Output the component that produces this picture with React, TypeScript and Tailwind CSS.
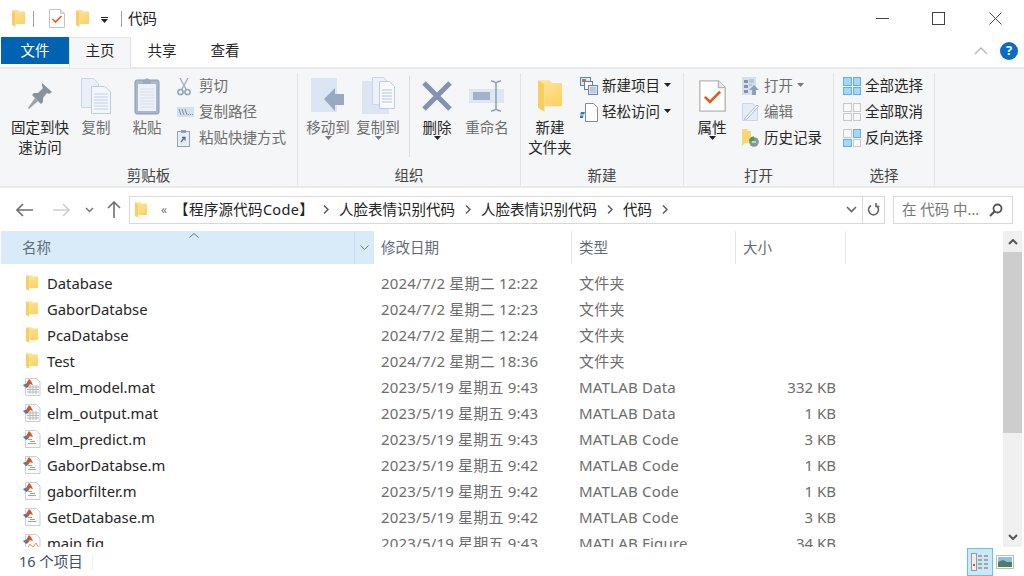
import type { ReactNode } from 'react';

const rows = [
  { name: 'Database', date: '2024/7/2 星期二 12:22', type: '文件夹', size: '', icon: 'folder' },
  { name: 'GaborDatabse', date: '2024/7/2 星期二 12:23', type: '文件夹', size: '', icon: 'folder' },
  { name: 'PcaDatabse', date: '2024/7/2 星期二 12:24', type: '文件夹', size: '', icon: 'folder' },
  { name: 'Test', date: '2024/7/2 星期二 18:36', type: '文件夹', size: '', icon: 'folder' },
  { name: 'elm_model.mat', date: '2023/5/19 星期五 9:43', type: 'MATLAB Data', size: '332 KB', icon: 'mat' },
  { name: 'elm_output.mat', date: '2023/5/19 星期五 9:43', type: 'MATLAB Data', size: '1 KB', icon: 'mat' },
  { name: 'elm_predict.m', date: '2023/5/19 星期五 9:43', type: 'MATLAB Code', size: '3 KB', icon: 'm' },
  { name: 'GaborDatabse.m', date: '2023/5/19 星期五 9:42', type: 'MATLAB Code', size: '1 KB', icon: 'm' },
  { name: 'gaborfilter.m', date: '2023/5/19 星期五 9:42', type: 'MATLAB Code', size: '1 KB', icon: 'm' },
  { name: 'GetDatabase.m', date: '2023/5/19 星期五 9:42', type: 'MATLAB Code', size: '3 KB', icon: 'm' },
  { name: 'main.fig', date: '2023/5/19 星期五 9:43', type: 'MATLAB Figure', size: '34 KB', icon: 'fig' },
];

function Folder({ w = 13, h = 17 }: { w?: number; h?: number }) {
  return (
    <svg width={w} height={h} viewBox="0 0 13 17">
      <defs>
        <linearGradient id="folderFill" x1="0" y1="0" x2="0.6" y2="1">
          <stop offset="0" stopColor="#fde69c" />
          <stop offset="1" stopColor="#fbd46a" />
        </linearGradient>
      </defs>
      <path d="M0 0h6l1.500 1.500H13V14H3.500V2z" fill="url(#folderFill)" />
      <path d="M0 0l3.500 2v15L0 15z" fill="#f8cf5f" />
    </svg>
  );
}

function CheckDoc({ w = 16, h = 19 }: { w?: number; h?: number }) {
  return (
    <svg width={w} height={h} viewBox="0 0 16 19">
      <path d="M.5.5h11l4 4v14H.5z" fill="#fff" stroke="#b5b5b5" strokeWidth="0.8" />
      <path d="M11.500.5v4h4" fill="#e8e8e8" stroke="#b5b5b5" strokeWidth="0.8" />
      <path d="M3.500 10l3 3 6-6" fill="none" stroke="#e8591c" strokeWidth="1.600" />
    </svg>
  );
}

function PageStack() {
  return (
    <svg width="30" height="36" viewBox="0 0 30 36">
      <path d="M.5.5h12l5 5v24H.5z" fill="#e9eff8" stroke="#c9d6e8" />
      <path d="M10.500 8.500h13l6 5v22h-19z" fill="#f3f6fb" stroke="#bdcde2" />
      <path d="M13 16h14M13 19h14M13 22h14M13 25h14M13 28h14M13 31h14" stroke="#c3d0e2" />
    </svg>
  );
}

function Clipboard() {
  return (
    <svg width="26" height="38" viewBox="0 0 26 38">
      <rect x="1" y="3" width="24" height="34" rx="2" fill="#a9b6cf" stroke="#8b99b6" />
      <rect x="4" y="7" width="18" height="27" fill="#edf2f9" />
      <path d="M6 12h14M6 15h14M6 18h14M6 21h14M6 24h14M6 27h14M6 30h14" stroke="#d5deec" />
      <path d="M9 4l4-3 4 3v3H9z" fill="#9aa8c3" />
    </svg>
  );
}

function Pin() {
  return (
    <svg width="26" height="28" viewBox="0 0 26 28">
      <path d="M15 1l10 9-3 2-2-1-4 5 0 4-2 2-9-9 2-2 4 0 5-5-1-2z" fill="#87929b" />
      <path d="M8 16l3 3-9 8-1-1z" fill="#9aa3ab" />
    </svg>
  );
}

function Scissors() {
  return (
    <svg width="14" height="19" viewBox="0 0 14 19" fill="none">
      <path d="M3 1l6 11M11 1L5 12" stroke="#a5aeba" strokeWidth="1.400" />
      <circle cx="3.500" cy="15" r="2.600" stroke="#8ea2c0" strokeWidth="1.500" />
      <circle cx="10.500" cy="15" r="2.600" stroke="#8ea2c0" strokeWidth="1.500" />
    </svg>
  );
}

function CopyPathIcon() {
  return (
    <svg width="17" height="10" viewBox="0 0 17 10">
      <rect width="17" height="10" fill="#d5e1f1" />
      <path d="M2 2l2 6M5 2l2 6M8 2l2 6" stroke="#7e8ea5" />
      <path d="M11 7.500h1M13 7.500h1M15 7.500h1" stroke="#7e8ea5" />
    </svg>
  );
}

function PasteShortcutIcon() {
  return (
    <svg width="13" height="17" viewBox="0 0 13 17">
      <rect x=".5" y="1.500" width="12" height="15" fill="#e6edf6" stroke="#90a0b8" />
      <rect x="4" y="0" width="5" height="3" fill="#90a0b8" />
      <path d="M4 12l3-4M5 7.500h3v3" fill="none" stroke="#5c6d86" strokeWidth="1.300" />
    </svg>
  );
}

function MoveIcon() {
  return (
    <svg width="34" height="36" viewBox="0 0 34 36">
      <rect width="26" height="34" fill="#dbe5f3" />
      <path d="M13 24l11-11v6h9v11h-9v6z" fill="#98a9c1" transform="translate(0 -3)" />
    </svg>
  );
}

function CopyToIcon() {
  return (
    <svg width="33" height="38" viewBox="0 0 33 38">
      <rect y="4" width="27" height="33" fill="#dbe5f3" />
      <path d="M10.500.5h11l5 5v22h-16z" fill="#edf2f9" stroke="#c9d6e8" />
      <path d="M17.500 4.500h10l5 5v22h-15z" fill="#f7f9fc" stroke="#bdcde2" />
      <path d="M20 13h10M20 16h10M20 19h10M20 22h10M20 25h10" stroke="#b5c3d6" />
    </svg>
  );
}

function DeleteX() {
  return (
    <svg width="32" height="32" viewBox="0 0 32 32">
      <path d="M3 3l26 26M29 3L3 29" stroke="#8393ad" strokeWidth="5" />
    </svg>
  );
}

function RenameIcon() {
  return (
    <svg width="36" height="32" viewBox="0 0 36 32" fill="none">
      <rect x="0" y="9" width="35" height="14" fill="#dde7f4" />
      <rect x="4" y="12" width="17" height="8" fill="#a4b2c8" />
      <path d="M22 1c3 0 4 1 5 2 1-1 2-2 5-2M27 3v26M22 31c3 0 4-1 5-2 1 1 2 2 5 2" stroke="#8e9db5" strokeWidth="1.500" />
    </svg>
  );
}

function NewItemIcon() {
  return (
    <svg width="18" height="18" viewBox="0 0 18 18">
      <rect x=".5" y=".5" width="10" height="8" fill="#dcebf8" stroke="#4b88bd" />
      <rect x="2" y="2" width="4" height="3" fill="#e25d4c" />
      <rect x="4.500" y="4.500" width="8" height="8" fill="#fff" stroke="#6d7f95" />
      <rect x="8.500" y="8.500" width="9" height="9" fill="#d7e4f3" stroke="#6f86a5" />
      <path d="M10 11h6M10 13h6M10 15h6" stroke="#9fb1c8" />
    </svg>
  );
}

function EasyAccessIcon() {
  return (
    <svg width="18" height="19" viewBox="0 0 18 19">
      <path d="M5.500.5h8l4 4v14h-12z" fill="#fff" stroke="#8a8a8a" />
      <path d="M1 9h4l-1 2.500H0z" fill="#2c7dc4" />
      <path d="M0 12.500h3.500L3 15H0z" fill="#2c7dc4" />
    </svg>
  );
}

function OpenIcon() {
  return (
    <svg width="17" height="18" viewBox="0 0 17 18">
      <rect width="14" height="18" fill="#d5dfed" />
      <path d="M2 3h4v3H2zM2 8h4v3H2zM2 13h4v3H2z" fill="#8494ab" />
      <path d="M7 3h5M7 5h5M7 8h3" stroke="#a3b0c4" />
      <path d="M12 8l5 5h-3v5h-4v-5H7z" fill="#8da0ba" />
    </svg>
  );
}

function EditIcon() {
  return (
    <svg width="17" height="18" viewBox="0 0 17 18" fill="none">
      <path d="M.5.5h10l5 4v13H.5z" fill="#e4ecf6" stroke="#cbd7e6" />
      <path d="M3 15L15 2l1.500 1.500L5 16l-2.500 .5z" fill="#fff" stroke="#a9b9ce" />
    </svg>
  );
}

function HistoryIcon() {
  return (
    <svg width="18" height="18" viewBox="0 0 18 18">
      <path d="M0 0h5l1 2h3v12H3l-3 3z" fill="#fbd774" />
      <circle cx="12" cy="13" r="4.800" fill="#8d9499" />
      <path d="M7 12a5 5 0 0 1 5-4.500v4z" fill="#3aa63c" />
      <path d="M10 13h4" stroke="#fff" />
    </svg>
  );
}

function SelectGrid({ on }: { on: number[] }) {
  const cells = [0, 1, 2, 3];
  return (
    <div className="grid h-[18px] w-[18px] grid-cols-2 gap-[1px]">
      {cells.map(c => (
        <div key={c} className={on.includes(c) ? 'border border-[#5fb0ee] bg-[#a8d6fa]' : 'border border-[#c9c9c9] bg-[#f8f8f8]'} />
      ))}
    </div>
  );
}

function FileIcon({ kind }: { kind: string }) {
  if (kind === 'folder') {
    return <Folder w={12} h={16} />;
  }
  return (
    <svg width="18" height="18" viewBox="0 0 18 18">
      <path d="M2.500 .5h11l3.500 3.500v13.500h-14.500z" fill="#fbfbfb" stroke="#c9d0d8" />
      {kind === 'mat' && (
        <path d="M4 9h12M4 11.500h12M4 14h12M7 7v9M10 7v9M13 7v9" stroke="#b9b9b9" strokeWidth="1" fill="none" />
      )}
      {kind === 'm' && (
        <g>
          <path d="M5 9.500h4M7 11.500h5" stroke="#77b777" />
          <path d="M5 13.500h8" stroke="#a5a5a5" />
        </g>
      )}
      {kind === 'fig' && <path d="M4 15l3-5 3 3 3-4 3 5" stroke="#e99a55" fill="none" />}
      <path d="M0 7l3-1 3-5 2 2 2 4-3-1-2 3z" fill="#d9532a" />
      <path d="M0 7l3-1 2 3-2 1z" fill="#3c7fc0" />
    </svg>
  );
}

function Caret({ color = '#555' }: { color?: string }) {
  return (
    <svg width="7" height="4" viewBox="0 0 7 4">
      <path d="M0 0h7L3.500 4z" fill={color} />
    </svg>
  );
}

function BigButton({ icon, lines, muted, caret, className }: { icon: ReactNode; lines: string[]; muted?: boolean; caret?: boolean; className: string }) {
  return (
    <div className={'flex flex-col items-center ' + className}>
      <div className="flex h-[44px] w-full items-center justify-center pt-[2px]">{icon}</div>
      {lines.map(l => (
        <div key={l} className={'h-[20px] whitespace-nowrap leading-[20px] ' + (muted ? 'text-[#6e6e6e]' : 'text-[#262626]')}>{l}</div>
      ))}
      {caret && <div className="mt-[-1px]"><Caret color={muted ? '#777' : '#222'} /></div>}
    </div>
  );
}

function SmallButton({ icon, label, muted, caret }: { icon: ReactNode; label: string; muted?: boolean; caret?: boolean }) {
  return (
    <div className="flex h-[26px] items-center">
      <div className="flex w-[22px] shrink-0 items-center">{icon}</div>
      <span className={'whitespace-nowrap ' + (muted ? 'text-[#6e6e6e]' : 'text-[#262626]')}>{label}</span>
      {caret && <span className="mb-[3px] ml-[4px]"><Caret color={muted ? '#777' : '#222'} /></span>}
    </div>
  );
}

function Group({ label, className, children }: { label: string; className: string; children: ReactNode }) {
  return (
    <div className={'flex flex-col border-r border-[#e2e3e4] ' + className}>
      <div className="flex min-h-0 flex-1">{children}</div>
      <div className="h-[21px] shrink-0 text-center leading-[20px] text-[#444]">{label}</div>
    </div>
  );
}

function Crumb() {
  return (
    <svg className="mx-[10px] shrink-0" width="6" height="9" viewBox="0 0 6 9">
      <path d="M1 .5l4 4-4 4" fill="none" stroke="#555" strokeWidth="1.400" />
    </svg>
  );
}

export default function App() {
  return (
    <div className="flex h-[576px] w-[1024px] flex-col overflow-hidden bg-white text-[14.5px] text-[#262626]" style={{ fontFamily: '"Noto Sans", "Noto Sans CJK SC", sans-serif' }}>
      {/* title bar */}
      <div className="flex h-[37px] shrink-0 items-center">
        <div className="ml-[12px]"><Folder /></div>
        <div className="ml-[8px] h-[16px] w-px bg-[#a0a0a0]" />
        <div className="ml-[15px]"><CheckDoc /></div>
        <div className="ml-[11px]"><Folder /></div>
        <div className="ml-[12px] mt-[3px] flex flex-col items-center gap-[1px]">
          <div className="h-px w-[7px] bg-[#222]" />
          <Caret color="#222" />
        </div>
        <div className="ml-[13px] h-[16px] w-px bg-[#a0a0a0]" />
        <div className="ml-[6px] text-[#222]">代码</div>
        <div className="ml-auto flex items-center">
          <div className="h-px w-[13px] bg-[#444]" />
          <div className="ml-[43px] h-[13px] w-[13px] border border-[#444]" />
          <svg className="ml-[44px] mr-[22px]" width="13" height="13" viewBox="0 0 13 13">
            <path d="M.5.5l12 12M12.500.5l-12 12" stroke="#444" />
          </svg>
        </div>
      </div>

      {/* tabs */}
      <div className="relative z-10 flex h-[30px] shrink-0 items-start">
        <div className="ml-px flex h-[27px] w-[68px] items-center justify-center bg-[#0063b1] text-white">文件</div>
        <div className="flex h-[31px] w-[62px] items-center justify-center border-x border-t border-[#e2e3e4] bg-[#f5f6f7] pb-[4px]">主页</div>
        <div className="flex h-[27px] w-[62px] items-center justify-center">共享</div>
        <div className="flex h-[27px] w-[64px] items-center justify-center">查看</div>
        <div className="ml-auto flex h-[27px] items-center">
          <svg width="14" height="8" viewBox="0 0 14 8">
            <path d="M1 7l6-6 6 6" fill="none" stroke="#b5b5b5" strokeWidth="1.300" />
          </svg>
          <div className="ml-[12px] mr-[6px] flex h-[18px] w-[18px] items-center justify-center rounded-full bg-[#0a6cc4] text-[13px] font-bold text-white">?</div>
        </div>
      </div>

      {/* ribbon */}
      <div className="flex h-[121px] shrink-0 border-y-2 border-[#e8e9ea] bg-[#f5f6f7] pt-[4px]">
        <Group label="剪贴板" className="w-[298px]">
          <BigButton className="ml-[8px] w-[64px]" icon={<Pin />} lines={['固定到快', '速访问']} />
          <BigButton className="w-[48px]" muted icon={<PageStack />} lines={['复制']} />
          <BigButton className="w-[54px]" muted icon={<Clipboard />} lines={['粘贴']} />
          <div className="ml-[3px] flex flex-col">
            <SmallButton muted icon={<Scissors />} label="剪切" />
            <SmallButton muted icon={<CopyPathIcon />} label="复制路径" />
            <SmallButton muted icon={<PasteShortcutIcon />} label="粘贴快捷方式" />
          </div>
        </Group>
        <Group label="组织" className="w-[223px]">
          <BigButton className="ml-[5px] w-[50px]" muted caret icon={<MoveIcon />} lines={['移动到']} />
          <BigButton className="w-[50px]" muted caret icon={<CopyToIcon />} lines={['复制到']} />
          <div className="ml-[6px] mr-[2px] mt-[3px] h-[81px] w-px bg-[#dcdddf]" />
          <BigButton className="w-[50px]" caret icon={<DeleteX />} lines={['删除']} />
          <BigButton className="w-[50px]" muted icon={<RenameIcon />} lines={['重命名']} />
        </Group>
        <Group label="新建" className="w-[163px]">
          <BigButton className="ml-[5px] w-[48px]" icon={<Folder w={24} h={34} />} lines={['新建', '文件夹']} />
          <div className="ml-[6px] flex flex-col">
            <SmallButton caret icon={<NewItemIcon />} label="新建项目" />
            <SmallButton caret icon={<EasyAccessIcon />} label="轻松访问" />
          </div>
        </Group>
        <Group label="打开" className="w-[150px]">
          <BigButton className="ml-[6px] w-[44px]" caret icon={<CheckDoc w={27} h={34} />} lines={['属性']} />
          <div className="ml-[8px] flex flex-col">
            <SmallButton muted caret icon={<OpenIcon />} label="打开" />
            <SmallButton muted icon={<EditIcon />} label="编辑" />
            <SmallButton icon={<HistoryIcon />} label="历史记录" />
          </div>
        </Group>
        <Group label="选择" className="w-[101px]">
          <div className="ml-[9px] flex flex-col">
            <SmallButton icon={<SelectGrid on={[0, 1, 2, 3]} />} label="全部选择" />
            <SmallButton icon={<SelectGrid on={[]} />} label="全部取消" />
            <SmallButton icon={<SelectGrid on={[1, 2]} />} label="反向选择" />
          </div>
        </Group>
      </div>

      {/* address bar */}
      <div className="flex h-[43px] shrink-0 items-center">
        <svg className="ml-[16px]" width="17" height="14" viewBox="0 0 17 14" fill="none">
          <path d="M7 1L1 7l6 6M1 7h16" stroke="#6f6f6f" strokeWidth="1.600" />
        </svg>
        <svg className="ml-[20px]" width="17" height="14" viewBox="0 0 17 14" fill="none">
          <path d="M10 1l6 6-6 6M16 7H0" stroke="#cfcfcf" strokeWidth="1.600" />
        </svg>
        <svg className="ml-[15px]" width="9" height="6" viewBox="0 0 9 6" fill="none">
          <path d="M1 1l3.500 3.500L8 1" stroke="#777" strokeWidth="1.500" />
        </svg>
        <svg className="ml-[13px]" width="14" height="17" viewBox="0 0 14 17" fill="none">
          <path d="M1 7l6-6 6 6M7 1v16" stroke="#6f6f6f" strokeWidth="1.600" />
        </svg>
        <div className="ml-[8px] flex h-[28px] w-[756px] items-center border border-[#d9d9d9] text-[#222]">
          <div className="ml-[5px] flex w-[13px]"><Folder w={12} h={16} /></div>
          <span className="ml-[13px] text-[12px] text-[#777]">«</span>
          <span className="ml-[7px] w-[139px] whitespace-nowrap tracking-[0.3px]">【程序源代码Code】</span>
          <Crumb />
          <span className="whitespace-nowrap">人脸表情识别代码</span>
          <Crumb />
          <span className="whitespace-nowrap">人脸表情识别代码</span>
          <Crumb />
          <span>代码</span>
          <Crumb />
          <div className="ml-auto flex h-full items-center">
            <svg className="mr-[3px]" width="11" height="7" viewBox="0 0 11 7" fill="none">
              <path d="M1 1l4.500 4.500L10 1" stroke="#666" strokeWidth="1.600" />
            </svg>
            <div className="ml-[2px] flex h-full w-[22px] items-center justify-center border-l border-[#d9d9d9]">
              <svg width="13" height="14" viewBox="0 0 13 14" fill="none">
                <path d="M4 2.500a5 5 0 1 0 5 0M9 0v3.500h3.500" stroke="#666" strokeWidth="1.600" />
              </svg>
            </div>
          </div>
        </div>
        <div className="ml-[8px] flex h-[28px] w-[120px] items-center border border-[#d9d9d9] pl-[8px] text-[#777]">
          <span className="whitespace-nowrap">在 代码 中...</span>
          <svg className="ml-auto mr-[9px]" width="14" height="14" viewBox="0 0 14 14" fill="none">
            <circle cx="8.500" cy="5.500" r="4" stroke="#555" strokeWidth="1.800" />
            <path d="M5.500 8.500L1 13" stroke="#555" strokeWidth="2.200" />
          </svg>
        </div>
      </div>

      {/* file list */}
      <div className="flex min-h-0 flex-1">
        <div className="flex min-w-0 flex-1 flex-col">
          <div className="flex h-[33px] shrink-0 items-stretch text-[#5f6b7a]">
            <div className="relative ml-px flex w-[373px] items-center bg-[#d9ebf9]">
              <span className="ml-[21px] flex-1">名称</span>
              <svg className="absolute left-[188px] top-[2px]" width="10" height="5" viewBox="0 0 10 5" fill="none">
                <path d="M.5 4.500L5 .5l4.500 4" stroke="#777" />
              </svg>
              <div className="flex h-full w-[20px] items-center justify-center border-l border-[#c9dcec]">
                <svg width="9" height="5" viewBox="0 0 9 5" fill="none">
                  <path d="M.5 .5l4 4 4-4" stroke="#777" />
                </svg>
              </div>
            </div>
            <div className="flex w-[198px] items-center border-r border-[#e5e5e5] pl-[7px]">修改日期</div>
            <div className="flex w-[164px] items-center border-r border-[#e5e5e5] pl-[7px]">类型</div>
            <div className="flex w-[110px] items-center border-r border-[#e5e5e5] pl-[7px]">大小</div>
          </div>
          <div className="mt-[6px] min-h-0 flex-1 overflow-hidden text-[15px]">
            {rows.map(r => (
              <div key={r.name} className="flex h-[26px] items-center">
                <div className={r.icon === 'folder' ? 'ml-[26px] w-[21px] shrink-0' : 'ml-[23px] w-[24px] shrink-0'}>
                  <FileIcon kind={r.icon} />
                </div>
                <div className="w-[334px] shrink-0 whitespace-nowrap text-[14.8px] text-[#262626]">{r.name}</div>
                <div className="w-[198px] shrink-0 whitespace-nowrap tracking-[0.2px] text-[#6d6d6d]">{r.date}</div>
                <div className="w-[164px] shrink-0 whitespace-nowrap tracking-[0.2px] text-[#6d6d6d]">{r.type}</div>
                <div className="w-[93px] shrink-0 whitespace-nowrap text-right text-[#6d6d6d]">{r.size}</div>
              </div>
            ))}
          </div>
        </div>
        <div className="mr-[2px] flex w-[19px] shrink-0 flex-col bg-[#f0f0f0]">
          <div className="flex h-[21px] items-center justify-center">
            <svg width="10" height="6" viewBox="0 0 10 6" fill="none">
              <path d="M1 5l4-4 4 4" stroke="#555" strokeWidth="2" />
            </svg>
          </div>
          <div className="h-[181px] bg-[#cdcdcd]" />
          <div className="mt-auto flex h-[21px] items-center justify-center">
            <svg width="10" height="6" viewBox="0 0 10 6" fill="none">
              <path d="M1 1l4 4 4-4" stroke="#555" strokeWidth="2" />
            </svg>
          </div>
        </div>
      </div>

      {/* status bar */}
      <div className="flex h-[29px] shrink-0 items-center text-[#3f4f63]">
        <span className="ml-[19px]">16 个项目</span>
        <div className="ml-[9px] h-[16px] w-px bg-[#efefef]" />
        <div className="ml-auto flex items-center">
          <div className="flex h-[28px] w-[26px] items-center justify-center border border-[#66c0ee] bg-[#cce8f7]">
            <svg width="18" height="18" viewBox="0 0 18 18">
              <rect x=".5" y=".5" width="5" height="17" fill="#eee" stroke="#999" />
              <rect x="2" y="11" width="2" height="2" fill="#e2503c" />
              <path d="M7 3h4M13 3h4M7 7h4M13 7h4M7 11h4M13 11h4M7 15h4M13 15h4" stroke="#666" />
            </svg>
          </div>
          <svg className="ml-[3px] mr-[10px]" width="18" height="14" viewBox="0 0 18 14">
            <rect x=".5" y=".5" width="17" height="13" fill="#fff" stroke="#bcbcbc" />
            <rect x="2" y="2" width="14" height="5" fill="#8cc0ea" />
            <path d="M2 7l5-2 4 2 5 0v5H2z" fill="#4e7f63" />
          </svg>
        </div>
      </div>
    </div>
  );
}
